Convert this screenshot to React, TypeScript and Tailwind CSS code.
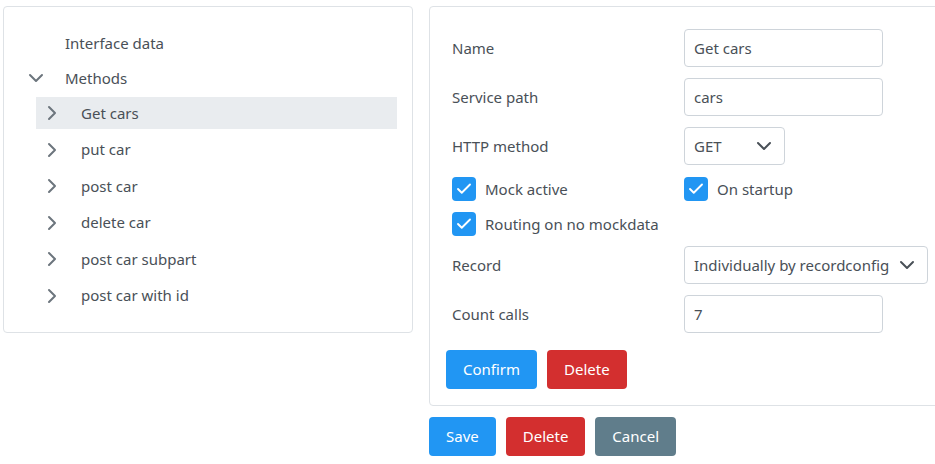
import { Check } from "lucide-react";

const methods = ["Get cars", "put car", "post car", "delete car", "post car subpart", "post car with id"];

function ChevronRight() {
  return (
    <svg width="10" height="16" viewBox="0 0 10 16" fill="none" stroke="#6c757d" strokeWidth="2" strokeLinecap="round" strokeLinejoin="round">
      <path d="M2 2l6 6-6 6" />
    </svg>
  );
}

function ChevronDown({ color = "#6c757d" }: { color?: string }) {
  return (
    <svg width="16" height="10" viewBox="0 0 16 10" fill="none" stroke={color} strokeWidth="2" strokeLinecap="round" strokeLinejoin="round">
      <path d="M2 2l6 6 6-6" />
    </svg>
  );
}

function TreeRow({ label, icon, active }: { label: string; icon?: React.ReactNode; active?: boolean }) {
  return (
    <div className={`flex items-center h-8 ${active ? "bg-[#e9ecef]" : ""}`}>
      <span className="w-8 flex justify-center">{icon}</span>
      <span className="ml-[13px]">{label}</span>
    </div>
  );
}

function CheckBox({ label }: { label: string }) {
  return (
    <label className="flex items-center gap-[9px]">
      <span className="w-6 h-6 rounded-[4px] bg-[#2196f3] flex items-center justify-center">
        <Check size={18} color="white" strokeWidth={2.5} />
      </span>
      <span>{label}</span>
    </label>
  );
}

function Field({ label, children }: { label: string; children: React.ReactNode }) {
  return (
    <div className="flex items-center">
      <span className="w-[238px] pl-[6px]">{label}</span>
      {children}
    </div>
  );
}

const inputCls = "h-[38px] border border-[#ced4da] rounded-[4px] px-[9px] flex items-center";
const btnCls = "h-[39px] px-[17px] rounded-[4px] text-white";

export default function App() {
  return (
    <div className="w-[935px] h-[464px] overflow-hidden bg-white text-[#495057] text-[15px] font-['Noto_Sans',sans-serif]">
      <div className="flex items-start pt-[6px] pl-[3px] gap-[16px]">
        {/* Tree panel */}
        <div className="w-[410px] shrink-0 border border-[#dee2e6] rounded-[4px] pt-[20px] pb-[20px] pl-[16px] pr-[15px]">
          <div className="flex flex-col gap-[3px]">
            <TreeRow label="Interface data" />
            <TreeRow label="Methods" icon={<ChevronDown />} />
            <div className="flex flex-col gap-[4.5px] pl-[16px]">
              {methods.map((m, i) => (
                <TreeRow key={m} label={m} icon={<ChevronRight />} active={i === 0} />
              ))}
            </div>
          </div>
        </div>

        {/* Detail column */}
        <div className="w-[530px] shrink-0 flex flex-col gap-[11px]">
          <div className="border border-[#dee2e6] rounded-[4px] pt-[22px] pb-[16px] pl-[16px] pr-[20px] flex flex-col">
            <div className="flex flex-col gap-[11px]">
              <Field label="Name">
                <div className={`${inputCls} w-[199px]`}>Get cars</div>
              </Field>
              <Field label="Service path">
                <div className={`${inputCls} w-[199px]`}>cars</div>
              </Field>
              <Field label="HTTP method">
                <div className={`${inputCls} w-[101px] justify-between pr-[12px]`}>
                  <span>GET</span>
                  <ChevronDown color="#495057" />
                </div>
              </Field>
            </div>
            <div className="flex flex-col gap-[11px] mt-[12px] pl-[6px]">
              <div className="flex items-center">
                <div className="w-[232px]"><CheckBox label="Mock active" /></div>
                <CheckBox label="On startup" />
              </div>
              <CheckBox label="Routing on no mockdata" />
            </div>
            <div className="flex flex-col gap-[11px] mt-[10px]">
              <Field label="Record">
                <div className={`${inputCls} w-[244px] justify-between pr-[12px]`}>
                  <span>Individually by recordconfig</span>
                  <ChevronDown color="#495057" />
                </div>
              </Field>
              <Field label="Count calls">
                <div className={`${inputCls} w-[199px]`}>7</div>
              </Field>
            </div>
            <div className="flex gap-[10px] mt-[17px]">
              <button className={`${btnCls} bg-[#2196f3]`}>Confirm</button>
              <button className={`${btnCls} bg-[#d32f2f]`}>Delete</button>
            </div>
          </div>
          <div className="flex gap-[10px]">
            <button className={`${btnCls} bg-[#2196f3]`}>Save</button>
            <button className={`${btnCls} bg-[#d32f2f]`}>Delete</button>
            <button className={`${btnCls} bg-[#607d8b]`}>Cancel</button>
          </div>
        </div>
      </div>
    </div>
  );
}
